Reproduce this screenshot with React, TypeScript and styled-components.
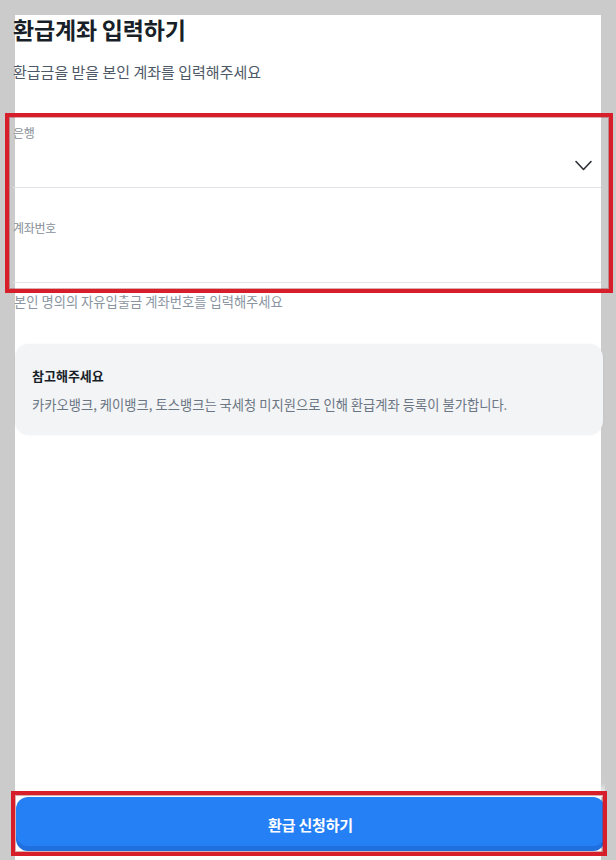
import React from "react";
import styled, { createGlobalStyle } from "styled-components";

const GlobalStyle = createGlobalStyle`
  html, body {
    margin: 0;
    padding: 0;
    background: #cbcbcb;
  }
  body {
    font-family: "Noto Sans CJK KR", "Noto Sans", sans-serif;
  }
  * { box-sizing: border-box; }
`;

const Screen = styled.div`
  position: relative;
  width: 616px;
  height: 860px;
  overflow: hidden;
  background: #cbcbcb;
  padding: 15px 15px 0 15px;
`;

const Panel = styled.div`
  width: 586px;
  height: 845px;
  background: #ffffff;
  display: flex;
  flex-direction: column;
`;

const Content = styled.div`
  flex: 1;
  margin-left: -2px;
  width: 590px;
  display: flex;
  flex-direction: column;
`;

const Title = styled.h1`
  margin: 0;
  font-size: 23px;
  line-height: 29px;
  font-weight: 700;
  color: #191f28;
  letter-spacing: -0.2px;
`;

const Subtitle = styled.p`
  margin: 18px 0 0 0;
  font-size: 15px;
  line-height: 20px;
  color: #4e5968;
`;

const Field = styled.div<{ $top: number; $pad: number }>`
  margin-top: ${(p) => p.$top}px;
  padding-top: ${(p) => p.$pad}px;
  width: 588px;
  border-bottom: 1px solid #e1e4e8;
  display: flex;
  flex-direction: column;
`;

const Label = styled.span`
  font-size: 12px;
  line-height: 16px;
  color: #868e96;
  letter-spacing: -0.3px;
`;

const InputRow = styled.div`
  height: 46px;
  display: flex;
  align-items: center;
  justify-content: flex-end;
`;

const Chevron = styled.svg`
  width: 17px;
  height: 11px;
  margin-right: 9px;
  margin-top: 2px;
`;

const Helper = styled.p`
  margin: 10px 0 0 1px;
  font-size: 13.3px;
  line-height: 18px;
  color: #8b95a1;
`;

const Notice = styled.div`
  margin: 33px 0 0 2px;
  width: 588px;
  background: #f3f4f6;
  border-radius: 14px;
  padding: 23px 17px 21px 17px;
  box-shadow: 0 0 3px rgba(0, 0, 0, 0.04);
  display: flex;
  flex-direction: column;
  gap: 11px;
`;

const NoticeTitle = styled.strong`
  font-size: 13px;
  line-height: 18px;
  font-weight: 700;
  color: #191f28;
`;

const NoticeBody = styled.span`
  font-size: 13.3px;
  line-height: 18px;
  color: #6b7684;
`;

const Footer = styled.div`
  padding: 0 0 9px 1px;
  position: relative;
  &::before {
    content: "";
    position: absolute;
    left: 0;
    right: -4px;
    top: -14px;
    height: 14px;
    background: linear-gradient(to bottom, rgba(255,255,255,0), #fbfdfd);
  }
`;

const SubmitButton = styled.button`
  display: block;
  width: 589px;
  height: 54px;
  border: none;
  border-radius: 12px;
  background: #2680f5;
  box-shadow: inset 0 -5px 0 rgba(0, 40, 120, 0.18);
  color: #ffffff;
  font-family: "Noto Sans CJK KR", "Noto Sans", sans-serif;
  font-size: 15px;
  font-weight: 700;
  letter-spacing: -0.2px;
  padding: 0;
  cursor: pointer;
`;

const Highlight = styled.div<{ $l: number; $t: number; $w: number; $h: number }>`
  position: absolute;
  left: ${(p) => p.$l}px;
  top: ${(p) => p.$t}px;
  width: ${(p) => p.$w}px;
  height: ${(p) => p.$h}px;
  border: 4px solid #d71f2b;
  box-shadow: inset 0 0 0 1px rgba(160, 20, 30, 0.35);
  pointer-events: none;
`;

export default function App() {
  return (
    <>
      <GlobalStyle />
      <Screen>
        <Panel>
          <Content>
            <Title>환급계좌 입력하기</Title>
            <Subtitle>환급금을 받을 본인 계좌를 입력해주세요</Subtitle>
            <Field $top={33} $pad={10}>
              <Label>은행</Label>
              <InputRow>
                <Chevron viewBox="0 0 17 11" fill="none">
                  <polyline
                    points="1,1.5 8.5,9.5 16,1.5"
                    stroke="#2b2f36"
                    strokeWidth="1.6"
                    strokeLinecap="round"
                    strokeLinejoin="round"
                  />
                </Chevron>
              </InputRow>
            </Field>
            <Field $top={0} $pad={32}>
              <Label>계좌번호</Label>
              <InputRow />
            </Field>
            <Helper>본인 명의의 자유입출금 계좌번호를 입력해주세요</Helper>
            <Notice>
              <NoticeTitle>참고해주세요</NoticeTitle>
              <NoticeBody>
                카카오뱅크, 케이뱅크, 토스뱅크는 국세청 미지원으로 인해 환급계좌 등록이 불가합니다.
              </NoticeBody>
            </Notice>
          </Content>
          <Footer>
            <SubmitButton type="button">환급 신청하기</SubmitButton>
          </Footer>
        </Panel>
        <Highlight $l={5} $t={113} $w={608} $h={180} />
        <Highlight $l={11} $t={791} $w={596} $h={65} />
      </Screen>
    </>
  );
}
